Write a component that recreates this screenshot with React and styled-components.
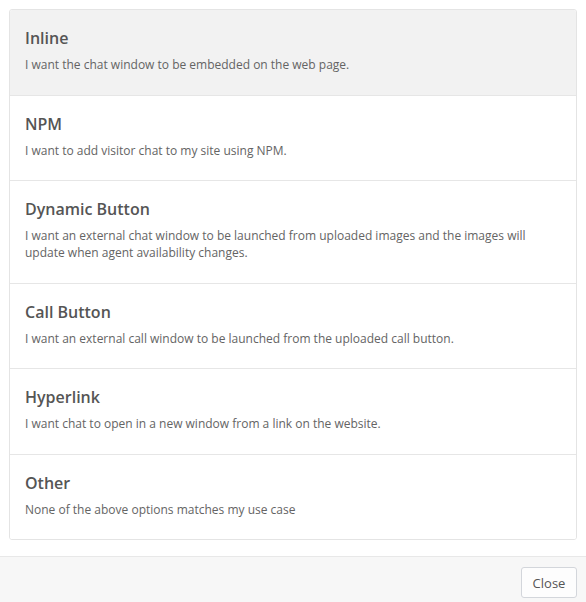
import React from "react";
import styled, { createGlobalStyle } from "styled-components";

const Global = createGlobalStyle`
  html, body { margin: 0; padding: 0; background: #fff; }
  body { font-family: "Open Sans", "Noto Sans", sans-serif; -webkit-font-smoothing: antialiased; }
  * { box-sizing: border-box; }
`;

const Modal = styled.div`
  width: 586px;
  height: 602px;
  display: flex;
  flex-direction: column;
  overflow: hidden;
  background: #fff;
`;

const Body = styled.div`
  padding: 9px 9px 0 9px;
  flex: 1;
`;

const List = styled.div`
  display: flex;
  flex-direction: column;
  border: 1px solid #e4e4e4;
  border-radius: 3px;
  overflow: hidden;
`;

const Item = styled.div`
  padding: 16px 15px 21.5px 15px;
  background: ${(p) => (p.$active ? "#f2f2f2" : "#fff")};
  border-top: ${(p) => (p.$first ? "none" : "1px solid #e6e6e6")};
  cursor: pointer;
`;

const Title = styled.div`
  font-size: 16px;
  font-weight: 600;
  line-height: 24px;
  color: #555555;
`;

const Desc = styled.div`
  margin-top: 6px;
  font-size: 12px;
  line-height: 17px;
  color: #646464;
`;

const Footer = styled.div`
  height: 46px;
  flex: none;
  background: #f7f7f7;
  border-top: 1px solid #e8e8e8;
  display: flex;
  justify-content: flex-end;
  align-items: flex-start;
  padding: 10px 9px 0 0;
`;

const Button = styled.button`
  width: 56px;
  height: 31px;
  border: 1px solid #d3d6db;
  border-radius: 3px;
  background: #fdfdfd;
  color: #555;
  font-family: "Open Sans", "Noto Sans", sans-serif;
  font-size: 13px;
  padding: 0;
  cursor: pointer;
`;

const options = [
  { title: "Inline", desc: "I want the chat window to be embedded on the web page.", active: true },
  { title: "NPM", desc: "I want to add visitor chat to my site using NPM." },
  {
    title: "Dynamic Button",
    desc: "I want an external chat window to be launched from uploaded images and the images will update when agent availability changes.",
  },
  { title: "Call Button", desc: "I want an external call window to be launched from the uploaded call button." },
  { title: "Hyperlink", desc: "I want chat to open in a new window from a link on the website." },
  { title: "Other", desc: "None of the above options matches my use case" },
];

export default function App() {
  return (
    <>
      <Global />
      <Modal>
        <Body>
          <List>
            {options.map((o, i) => (
              <Item key={o.title} $active={o.active} $first={i === 0}>
                <Title>{o.title}</Title>
                <Desc>{o.desc}</Desc>
              </Item>
            ))}
          </List>
        </Body>
        <Footer>
          <Button>Close</Button>
        </Footer>
      </Modal>
    </>
  );
}
